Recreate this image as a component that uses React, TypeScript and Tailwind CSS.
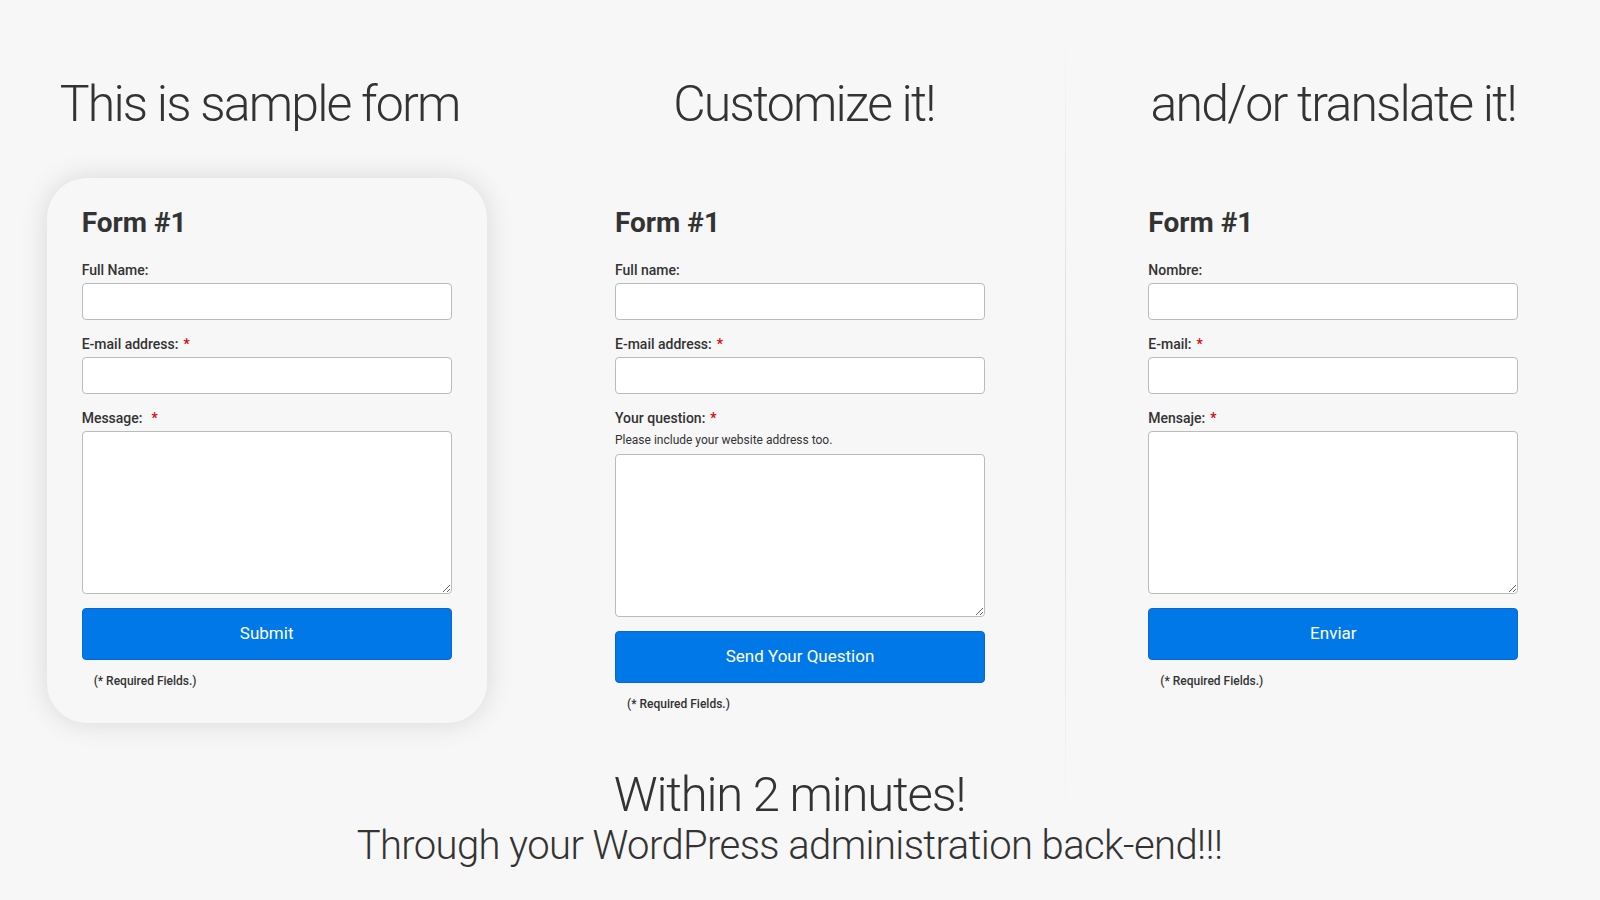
type Field = {
  label: string;
  required?: boolean;
  gap?: 'normal' | 'wide';
  hint?: string;
  multiline?: boolean;
};

type FormSpec = {
  title: string;
  fields: Field[];
  button: string;
  card?: boolean;
};

const forms: FormSpec[] = [
  {
    title: 'Form #1',
    card: true,
    fields: [
      { label: 'Full Name:' },
      { label: 'E-mail address:', required: true },
      { label: 'Message:', required: true, gap: 'wide', multiline: true },
    ],
    button: 'Submit',
  },
  {
    title: 'Form #1',
    fields: [
      { label: 'Full name:' },
      { label: 'E-mail address:', required: true },
      { label: 'Your question:', required: true, hint: 'Please include your website address too.', multiline: true },
    ],
    button: 'Send Your Question',
  },
  {
    title: 'Form #1',
    fields: [
      { label: 'Nombre:' },
      { label: 'E-mail:', required: true },
      { label: 'Mensaje:', required: true, multiline: true },
    ],
    button: 'Enviar',
  },
];

const headings = [
  { text: 'This is sample form', cls: 'pr-[14px]' },
  { text: 'Customize it!', cls: 'pl-[8px]' },
  { text: 'and/or translate it!', cls: '' },
];

function FormCard({ form }: { form: FormSpec }) {
  return (
    <div
      className={`w-[440px] px-[35px] pt-[31px] pb-[34px] ${
        form.card ? 'rounded-[40px] shadow-[0_0_28px_rgba(0,0,0,0.13)]' : ''
      }`}
    >
      <h2 className="text-[28px] leading-[28px] font-bold text-[#333]">{form.title}</h2>

      <div className="mt-[22px]">
        {form.fields.map((f) => (
          <div key={f.label} className="mb-[13px]">
            <label className="block text-[14px] leading-[22px] font-medium text-[#333] mb-[2px]">
              {f.label}
              {f.required && (
                <span className={`text-[#e00000] ${f.gap === 'wide' ? 'ml-[9px]' : 'ml-[5px]'}`}>*</span>
              )}
            </label>
            {f.hint && (
              <p className="text-[12px] leading-[16px] text-[#333] mt-[3px] mb-[6px]">{f.hint}</p>
            )}
            {f.multiline ? (
              <textarea className="block w-full h-[163px] bg-white border border-[#bbbbbb] rounded-[4px] outline-none" />
            ) : (
              <input className="block w-full h-[37px] bg-white border border-[#bbbbbb] rounded-[4px] outline-none" />
            )}
          </div>
        ))}
      </div>

      <button className="w-full h-[52px] mt-[1px] bg-[#0078e8] border border-[#0a66d8] rounded-[4px] text-white text-[17px]">
        {form.button}
      </button>

      <p className="mt-[13px] pl-[12px] text-[12px] leading-[16px] font-medium text-[#333]">(* Required Fields.)</p>
    </div>
  );
}

export default function App() {
  return (
    <div
      className="relative min-h-screen bg-[#f7f7f7] overflow-hidden"
      style={{ fontFamily: 'Roboto, "Liberation Sans", sans-serif' }}
    >
      {/* column divider */}
      <div className="absolute left-[1065px] top-[20px] h-[810px] w-px bg-gradient-to-b from-[#f7f7f7] via-[#d8d8d8] to-[#f7f7f7]" />

      <div className="grid grid-cols-3 pt-[79px]">
        {headings.map((h) => (
          <h1
            key={h.text}
            className={`text-center text-[50px] leading-[50px] font-light tracking-[-1.8px] text-[#333] ${h.cls}`}
          >
            {h.text}
          </h1>
        ))}
      </div>

      <div className="grid grid-cols-3 items-start mt-[49px] h-[593px]">
        {forms.map((f, i) => (
          <div key={i} className="flex justify-center">
            <FormCard form={f} />
          </div>
        ))}
      </div>

      <div className="text-center pr-[21px] font-light text-[#333]">
        <p className="text-[49px] leading-[48px] tracking-[-1.2px]">Within 2 minutes!</p>
        <p className="mt-[7px] text-[40px] leading-[40px] tracking-[-0.6px]">Through your WordPress administration back-end!!!</p>
      </div>
    </div>
  );
}
